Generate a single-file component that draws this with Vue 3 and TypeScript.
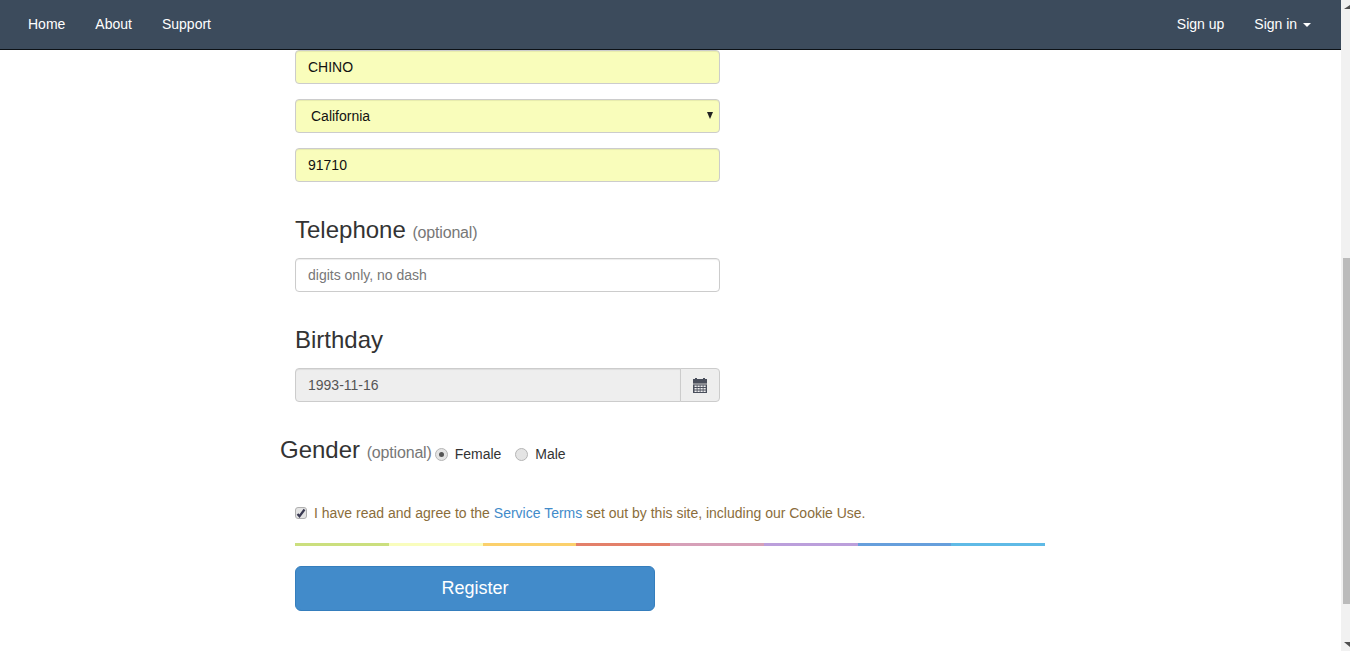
<script setup lang="ts">
const leftLinks: string[] = ['Home', 'About', 'Support']
const stripes: string[] = ['#cbdf7e', '#f9fdbd', '#fbd06c', '#e3806a', '#d6a0b8', '#bb9fdb', '#669fdc', '#5fbae6']
</script>

<template>
  <div class="page">
    <div class="main">
      <nav class="navbar">
        <ul class="nav-list">
          <li v-for="link in leftLinks" :key="link"><a href="#">{{ link }}</a></li>
        </ul>
        <ul class="nav-list">
          <li><a href="#">Sign up</a></li>
          <li><a href="#">Sign in <span class="caret"></span></a></li>
        </ul>
      </nav>

      <form class="form" @submit.prevent>
        <div class="fields">
          <input class="input filled" type="text" value="CHINO" />
          <div class="select-wrap">
            <select class="input filled select">
              <option>California</option>
            </select>
            <svg class="select-arrow" width="6" height="7" viewBox="0 0 6 7">
              <path d="M0 0h6L3 7z" fill="#222" />
            </svg>
          </div>
          <input class="input filled" type="text" value="91710" />
        </div>

        <h3 class="heading">Telephone <small>(optional)</small></h3>
        <input class="input" type="text" placeholder="digits only, no dash" />

        <h3 class="heading">Birthday</h3>
        <div class="date-group">
          <input class="input date" type="text" value="1993-11-16" readonly />
          <span class="addon">
            <svg class="cal" width="14" height="15" viewBox="0 0 14 15">
              <path fill="#4a4f5c" d="M2 0h2v1h6V0h2v1h2v4H0V1h2z" />
              <path fill="#8a8c92" d="M0 5h14v2H0z" />
              <path
                fill="#4a4f5c"
                d="M0 7h14v8H0zM1.500 7.500v1.500h2.200V7.500zM4.500 7.500v1.500h2.200V7.500zM7.500 7.500v1.500h2.200V7.500zM10.500 7.500v1.500h2.200V7.500zM1.500 10v1.500h2.200V10zM4.500 10v1.500h2.200V10zM7.500 10v1.500h2.200V10zM10.500 10v1.500h2.200V10zM1.500 12.500V14h2.200v-1.500zM4.500 12.500V14h2.200v-1.500zM7.500 12.500V14h2.200v-1.500zM10.500 12.500V14h2.200v-1.500z"
                fill-rule="evenodd"
              />
            </svg>
          </span>
        </div>

        <div class="gender">
          <h3 class="heading gender-title">Gender <small>(optional)</small></h3>
          <label class="radio"><span class="radio-dot checked"></span>Female</label>
          <label class="radio"><span class="radio-dot"></span>Male</label>
        </div>

        <label class="terms">
          <span class="check">
            <svg width="10" height="10" viewBox="0 0 10 10">
              <path d="M1.500 6l2 2.200L8.500 1.500" fill="none" stroke="#3a3a52" stroke-width="2.200" />
            </svg>
          </span>
          <span>I have read and agree to the <a href="#">Service Terms</a> set out by this site, including our Cookie Use.</span>
        </label>

        <div class="rainbow">
          <span v-for="c in stripes" :key="c" :style="{ background: c }"></span>
        </div>

        <button class="register" type="button">Register</button>
      </form>
    </div>

    <div class="scrollbar">
      <svg class="scroll-arrow" width="6" height="4" viewBox="0 0 6 4">
        <path d="M6 0v4H0z" fill="#505050" />
      </svg>
      <div class="scroll-track">
        <div class="scroll-thumb"></div>
      </div>
      <svg class="scroll-arrow bottom" width="6" height="5" viewBox="0 0 6 5">
        <path d="M0 0h6v5z" fill="#505050" />
      </svg>
    </div>
  </div>
</template>

<style>
html,
body {
  margin: 0;
  overflow: hidden;
  background: #fff;
}
</style>

<style scoped>
.page {
  display: flex;
  height: 651px;
  font-family: "Liberation Sans", Arial, sans-serif;
  font-size: 14px;
  color: #333;
}
.main {
  flex: 1;
  min-width: 0;
}
.navbar {
  display: flex;
  justify-content: space-between;
  height: 49px;
  padding: 0 15px 0 13px;
  background: #3c4b5c;
  border-bottom: 1px solid #0c1116;
}
.nav-list {
  display: flex;
  margin: 0;
  padding: 0;
  list-style: none;
}
.nav-list a {
  display: block;
  padding: 14px 15px;
  line-height: 20px;
  color: #fff;
  text-decoration: none;
}
.caret {
  display: inline-block;
  width: 0;
  height: 0;
  margin-left: 2px;
  vertical-align: middle;
  border-top: 4px solid #fff;
  border-left: 4px solid transparent;
  border-right: 4px solid transparent;
}
.form {
  display: flex;
  flex-direction: column;
  align-items: flex-start;
  padding-left: 295px;
}
.fields {
  display: flex;
  flex-direction: column;
  gap: 15px;
}
.input {
  box-sizing: border-box;
  display: block;
  width: 425px;
  height: 34px;
  padding: 6px 12px;
  font: inherit;
  color: #555;
  background: #fff;
  border: 1px solid #ccc;
  border-radius: 4px;
  box-shadow: inset 0 1px 1px rgba(0, 0, 0, 0.075);
  outline: none;
}
.input::placeholder {
  color: #777;
  opacity: 1;
}
.filled {
  color: #111;
  background: #f9fdbb;
}
.select-wrap {
  position: relative;
}
.select {
  appearance: none;
  padding-left: 12px;
  text-indent: 3px;
}
.select-arrow {
  position: absolute;
  top: 13px;
  right: 7px;
}
.heading {
  margin: 33px 0 13px;
  font-size: 24px;
  font-weight: 500;
  line-height: 30px;
  color: #333;
}
.heading small {
  font-size: 16px;
  font-weight: 400;
  line-height: 1;
  letter-spacing: -0.18px;
  color: #777;
}
.date-group {
  display: flex;
  width: 425px;
}
.date {
  flex: 1;
  width: auto;
  min-width: 0;
  background: #eee;
  border-radius: 4px 0 0 4px;
}
.addon {
  box-sizing: border-box;
  display: flex;
  align-items: center;
  justify-content: center;
  width: 40px;
  margin-left: -1px;
  background: #eee;
  border: 1px solid #ccc;
  border-radius: 0 4px 4px 0;
}
.gender {
  display: flex;
  align-items: flex-start;
  margin: 33px 0 0 -15px;
}
.gender-title {
  margin: 0;
}
.radio {
  display: flex;
  align-items: center;
  height: 20px;
  margin: 9px 14px 0 0;
  color: #333;
}
.gender-title + .radio {
  margin-left: 3px;
}
.radio-dot {
  box-sizing: border-box;
  display: flex;
  align-items: center;
  justify-content: center;
  width: 13px;
  height: 13px;
  margin-right: 7px;
  background: #e4e4e4;
  border: 1px solid #b5b5b5;
  border-radius: 50%;
}
.radio-dot.checked::after {
  content: "";
  width: 5px;
  height: 5px;
  background: #555;
  border-radius: 50%;
}
.terms {
  display: flex;
  align-items: center;
  gap: 7px;
  margin-top: 38px;
  line-height: 20px;
  color: #8a6d3b;
}
.terms a {
  color: #428bca;
  text-decoration: none;
}
.check {
  box-sizing: border-box;
  display: flex;
  align-items: center;
  justify-content: center;
  width: 12px;
  height: 12px;
  background: #e4e4e4;
  border: 1px solid #b0b0b0;
  border-radius: 3px;
}
.rainbow {
  display: flex;
  width: 750px;
  height: 3px;
  margin-top: 20px;
}
.rainbow span {
  flex: 1;
}
.register {
  box-sizing: border-box;
  width: 360px;
  height: 45px;
  margin-top: 20px;
  font: inherit;
  font-size: 18px;
  color: #fff;
  background: #428bca;
  border: 1px solid #357ebd;
  border-radius: 6px;
}
.scrollbar {
  flex: none;
  display: flex;
  flex-direction: column;
  align-items: flex-end;
  width: 9px;
  background: #f1f1f1;
}
.scroll-arrow {
  flex: none;
  margin: 5px 0;
}
.scroll-arrow.bottom {
  margin-bottom: 4px;
}
.scroll-track {
  flex: 1;
  width: 7px;
  padding-top: 244px;
  padding-bottom: 33px;
  box-sizing: border-box;
  display: flex;
}
.scroll-thumb {
  flex: 1;
  background: #bbb;
}
</style>
